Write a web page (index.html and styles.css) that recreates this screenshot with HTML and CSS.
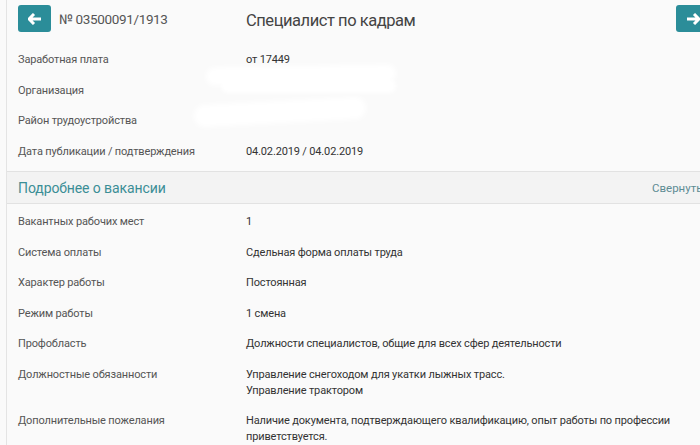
FILE: index.html
```html
<!DOCTYPE html>
<html lang="ru">
<head>
<meta charset="utf-8">
<link rel="stylesheet" href="styles.css">
</head>
<body>
<div class="page">
  <div class="head">
    <a class="nav-btn"><svg width="14" height="12" viewBox="0 0 14 12"><path d="M6 1 L1 6 L6 11 M1.5 6 H13" stroke="#fff" stroke-width="3" fill="none" stroke-linejoin="miter"/></svg></a>
    <span class="num">№ 03500091/1913</span>
    <h1 class="title">Специалист по кадрам</h1>
    <a class="nav-btn next"><svg width="14" height="12" viewBox="0 0 14 12"><path d="M8 1 L13 6 L8 11 M12.5 6 H1" stroke="#fff" stroke-width="3" fill="none"/></svg></a>
  </div>
  <div class="rows">
    <div class="row"><div class="lbl">Заработная плата</div><div class="val">от 17449</div></div>
    <div class="row"><div class="lbl">Организация</div><div class="val"><span class="blob b1"></span><span class="blob b1b"></span></div></div>
    <div class="row"><div class="lbl">Район трудоустройства</div><div class="val"><span class="blob b2"></span></div></div>
    <div class="row"><div class="lbl">Дата публикации / подтверждения</div><div class="val">04.02.2019 / 04.02.2019</div></div>
  </div>
  <div class="band">
    <span class="band-title">Подробнее о вакансии</span>
    <span class="collapse">Свернуть</span>
  </div>
  <div class="rows rows2">
    <div class="row"><div class="lbl">Вакантных рабочих мест</div><div class="val">1</div></div>
    <div class="row"><div class="lbl">Система оплаты</div><div class="val">Сдельная форма оплаты труда</div></div>
    <div class="row"><div class="lbl">Характер работы</div><div class="val">Постоянная</div></div>
    <div class="row"><div class="lbl">Режим работы</div><div class="val">1 смена</div></div>
    <div class="row"><div class="lbl">Профобласть</div><div class="val">Должности специалистов, общие для всех сфер деятельности</div></div>
    <div class="row"><div class="lbl">Должностные обязанности</div><div class="val">Управление снегоходом для укатки лыжных трасс.<br>Управление трактором</div></div>
    <div class="row"><div class="lbl">Дополнительные пожелания</div><div class="val">Наличие документа, подтверждающего квалификацию, опыт работы по профессии<br>приветствуется.</div></div>
  </div>
</div>
</body>
</html>
```
FILE: styles.css
```css
html, body {
  margin: 0;
  padding: 0;
  background: #fafafa;
  font-family: Roboto, "Noto Sans", Arial, sans-serif;
  overflow: hidden;
}
.page {
  margin-left: 6px;
  border-left: 1px solid #e4e4e4;
  min-height: 445px;
  width: 760px;
}
.head {
  display: flex;
  align-items: center;
  height: 38px;
  padding: 0 58px 0 11px;
}
.nav-btn {
  display: flex;
  align-items: center;
  justify-content: center;
  width: 33px;
  height: 27px;
  margin-top: -1px;
  background: #2b8d99;
  border-radius: 3px;
  flex: none;
}
.nav-btn.next {
  margin-left: auto;
}
.num {
  margin-left: 8px;
  font-size: 13.5px;
  letter-spacing: -0.35px;
  color: #555;
  width: 187px;
}
.title {
  margin: 0;
  font-weight: 400;
  font-size: 16.5px;
  letter-spacing: -0.45px;
  color: #444;
  padding-top: 3px;
}
.rows {
  padding: 7px 0 4px 11px;
}
.row {
  display: flex;
  padding: 7px 0 7.5px;
  line-height: 16px;
  font-size: 11px;
  letter-spacing: -0.15px;
}
.lbl {
  width: 228px;
  flex: none;
  color: #555;
}
.val {
  color: #333;
  position: relative;
}
.blob {
  position: absolute;
  background: #fff;
  border-radius: 12px;
  filter: blur(2px);
}
.b1 {
  left: -40px;
  top: -17px;
  width: 190px;
  height: 18px;
  transform: rotate(-1deg);
}
.b1b {
  left: -25px;
  top: -4px;
  width: 175px;
  height: 14px;
}
.b2 {
  left: -52px;
  top: -12px;
  width: 172px;
  height: 22px;
  transform: rotate(-3deg);
}
.band {
  display: flex;
  align-items: center;
  height: 31px;
  background: #f3f3f3;
  border-top: 1px solid #e2e2e2;
  border-bottom: 1px solid #e2e2e2;
  padding-left: 11px;
}
.band-title {
  font-size: 14px;
  letter-spacing: -0.1px;
  color: #3b8e96;
  width: 634px;
  padding-top: 1px;
}
.collapse {
  font-size: 11.5px;
  color: #5e8c93;
  white-space: nowrap;
}
.rows2 {
  padding-top: 3px;
}
```
